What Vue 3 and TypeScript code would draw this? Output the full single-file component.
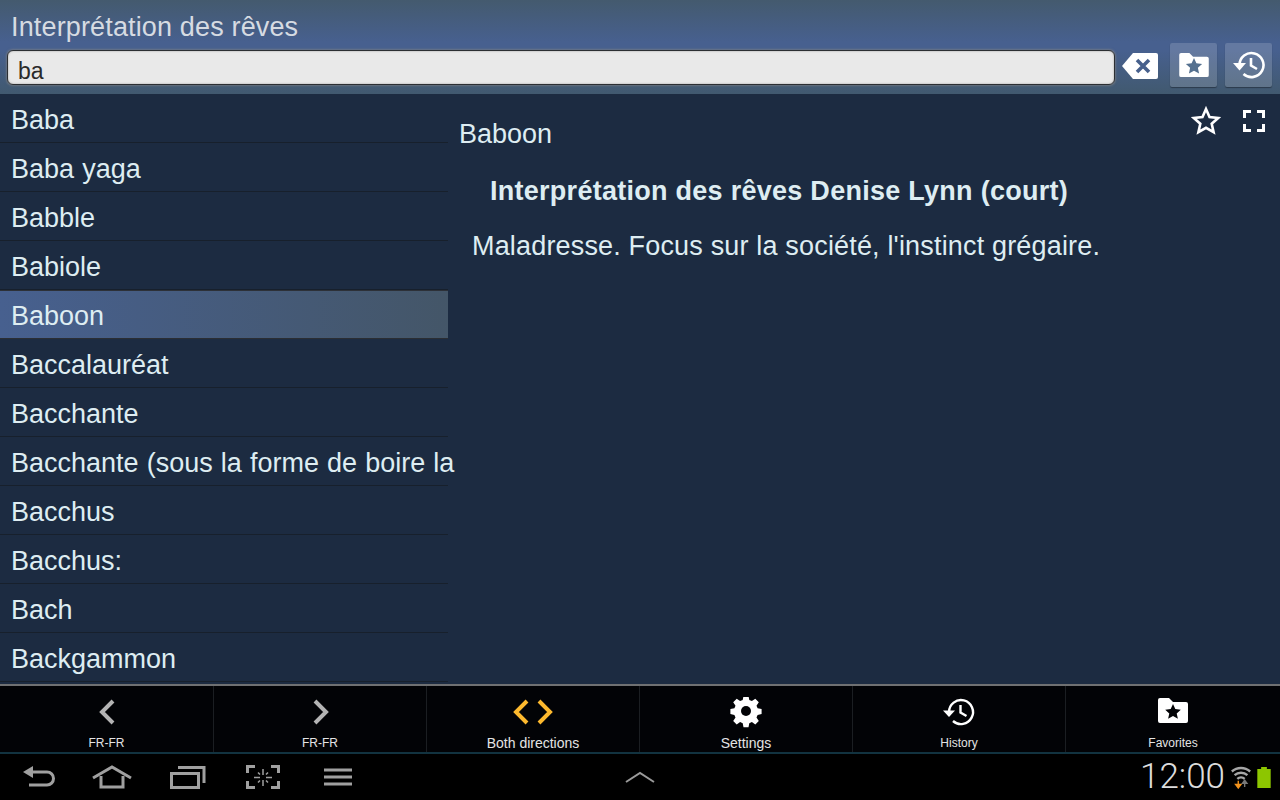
<template>
  <div class="screen">
    <header class="top">
      <div class="top__title">Interprétation des rêves</div>
      <div class="top__search">
        <div class="search-field">ba</div>
        <svg class="clear-icon" viewBox="0 0 36 28" width="36" height="28" aria-hidden="true">
          <path d="M11 1h23a2 2 0 0 1 2 2v22a2 2 0 0 1-2 2H11L0 14z" fill="#fff" />
          <path d="M15 8l12 12M27 8L15 20" stroke="#47608c" stroke-width="3.6" fill="none" />
        </svg>
        <button class="top-btn" type="button" aria-label="Favorites">
          <svg viewBox="0 0 32 26" width="30" height="24" aria-hidden="true">
            <path d="M0 2a2 2 0 0 1 2-2h9l4 4h15a2 2 0 0 1 2 2v18a2 2 0 0 1-2 2H2a2 2 0 0 1-2-2z" fill="#fff" />
            <path d="M16 5.500l2.600 5.700 6.200.7-4.600 4.200 1.300 6.100-5.500-3.100-5.500 3.100 1.300-6.100-4.600-4.200 6.200-.7z" fill="#54708f" />
          </svg>
        </button>
        <button class="top-btn" type="button" aria-label="History">
          <svg viewBox="0 0 32 28" width="32" height="28" aria-hidden="true">
            <path d="M6.500 14a12 12 0 1 1 4 9" fill="none" stroke="#fff" stroke-width="2.600" />
            <path d="M0 12h13l-6.500 7.500z" fill="#fff" />
            <path d="M18 7v7.500l6 3.500" fill="none" stroke="#fff" stroke-width="2.600" />
          </svg>
        </button>
      </div>
    </header>

    <main class="body">
      <ul class="list">
        <li
          v-for="word in words"
          :key="word"
          class="list__row"
          :class="{ 'list__row--active': word === selected }"
        >
          <span class="list__text">{{ word }}</span>
        </li>
      </ul>
      <section class="entry">
        <div class="entry__tools">
          <svg viewBox="0 0 30 30" width="30" height="30" aria-hidden="true">
            <path d="M15 3l3.500 8 8.700.9-6.500 5.800 1.900 8.500-7.600-4.400-7.600 4.400 1.900-8.500-6.500-5.800 8.700-.9z" fill="none" stroke="#fff" stroke-width="2.600" stroke-linejoin="miter" />
          </svg>
          <svg viewBox="0 0 22 22" width="22" height="22" aria-hidden="true">
            <path d="M8 1.500H1.500V8M14 1.500h6.500V8M1.500 14v6.500H8M20.500 14v6.500H14" fill="none" stroke="#fff" stroke-width="3" />
          </svg>
        </div>
        <div class="entry__word">Baboon</div>
        <h2 class="entry__source">Interprétation des rêves Denise Lynn (court)</h2>
        <p class="entry__text">Maladresse. Focus sur la société, l'instinct grégaire.</p>
      </section>
    </main>

    <nav class="tabs">
      <div v-for="tab in tabs" :key="tab.label + tab.icon" class="tab">
        <svg class="tab__icon" viewBox="0 0 44 32" width="44" height="32" aria-hidden="true">
          <path v-if="tab.icon === 'prev'" d="M28 4L17 15l11 11" fill="none" stroke="#b4b4b4" stroke-width="4" />
          <path v-if="tab.icon === 'next'" d="M17 4l11 11-11 11" fill="none" stroke="#b4b4b4" stroke-width="4" />
          <path v-if="tab.icon === 'both'" d="M16 4L5 15l11 11M28 4l11 11-11 11" fill="none" stroke="#fdb92e" stroke-width="4" />
          <template v-if="tab.icon === 'gear'">
            <path d="M19.500 0h5l.8 4 2.600 1.100 3.400-2.300 3.500 3.500-2.300 3.400 1.100 2.600 4 .8v5l-4 .8-1.100 2.600 2.300 3.400-3.500 3.500-3.400-2.300-2.600 1.100-.8 4h-5l-.8-4-2.600-1.100-3.400 2.300-3.500-3.500 2.300-3.400-1.100-2.600-4-.8v-5l4-.8 1.100-2.600-2.300-3.400 3.500-3.500 3.400 2.300 2.600-1.100z" fill="#fff" transform="translate(0 -1)" />
            <circle cx="22" cy="14" r="5" fill="#020306" />
          </template>
          <template v-if="tab.icon === 'history'">
            <path d="M12 15a12 12 0 1 1 4 9" fill="none" stroke="#fff" stroke-width="2.400" />
            <path d="M6 13.500h12L12 20z" fill="#fff" />
            <path d="M23.500 8v7.500l6 3.500" fill="none" stroke="#fff" stroke-width="2.400" />
          </template>
          <template v-if="tab.icon === 'favorite'">
            <path d="M7 3a2 2 0 0 1 2-2h9l4 4h13a2 2 0 0 1 2 2v17a2 2 0 0 1-2 2H9a2 2 0 0 1-2-2z" fill="#fff" />
            <path d="M22 7l2.300 5.100 5.500.6-4.100 3.700 1.200 5.400-4.900-2.800-4.900 2.800 1.200-5.400-4.100-3.700 5.500-.6z" fill="#020306" />
          </template>
        </svg>
        <span class="tab__label" :class="`tab__label--${tab.size}`">{{ tab.label }}</span>
      </div>
    </nav>

    <footer class="sysbar">
      <div class="sysbar__left">
        <svg viewBox="0 0 34 24" width="34" height="24" aria-hidden="true">
          <path d="M10 7h15a6.500 6.500 0 0 1 0 13H7" fill="none" stroke="#a0a0a0" stroke-width="3" />
          <path d="M1 7l10-6v12z" fill="#a0a0a0" />
        </svg>
        <svg viewBox="0 0 40 24" width="40" height="24" aria-hidden="true">
          <path d="M1 13L20 2l19 11" fill="none" stroke="#a0a0a0" stroke-width="3" />
          <path d="M9 11v11h22V11" fill="none" stroke="#a0a0a0" stroke-width="3" />
        </svg>
        <svg viewBox="0 0 36 24" width="36" height="24" aria-hidden="true">
          <rect x="1.500" y="8.500" width="27" height="14" fill="none" stroke="#a0a0a0" stroke-width="3" />
          <path d="M8 2.500h26V18" fill="none" stroke="#a0a0a0" stroke-width="3" />
        </svg>
        <svg viewBox="0 0 34 24" width="34" height="24" aria-hidden="true">
          <path d="M9 1.500H1.500V8M25 1.500h7.500V8M1.500 16v6.500H9M32.500 16v6.500H25" fill="none" stroke="#a0a0a0" stroke-width="3" />
          <path d="M17 4v6M17 15v6M8 12.500h6M20 12.500h6M12 7.500l2 2M22 7.500l-2 2M12 17.500l2-2M22 17.500l-2-2" fill="none" stroke="#a0a0a0" stroke-width="1.500" />
        </svg>
        <svg viewBox="0 0 28 18" width="28" height="18" aria-hidden="true">
          <path d="M0 2h28M0 9h28M0 16h28" fill="none" stroke="#a0a0a0" stroke-width="3" />
        </svg>
      </div>
      <svg class="sysbar__up" viewBox="0 0 30 12" width="30" height="12" aria-hidden="true">
        <path d="M1 11L15 2l14 9" fill="none" stroke="#9a9a9a" stroke-width="2" />
      </svg>
      <div class="sysbar__right">
        <span class="clock">12:00</span>
        <svg viewBox="0 0 24 26" width="22" height="24" aria-hidden="true">
          <path d="M2 7a15 15 0 0 1 20 0M5 11a10.500 10.500 0 0 1 14 0M8 15a6 6 0 0 1 8 0" fill="none" stroke="#a6a6a6" stroke-width="2.600" />
          <path d="M9 17v6M6 21l3 4 3-4z" fill="#f2921c" stroke="#f2921c" stroke-width="1.500" />
          <path d="M16 24v-6M13.500 20l2.500-3.500 2.500 3.500z" fill="#777" stroke="#777" stroke-width="1.500" />
        </svg>
        <svg class="battery" viewBox="0 0 14 22" width="14" height="21" aria-hidden="true">
          <path d="M4 0h6v2h4v20H0V2h4z" fill="#8dc600" />
        </svg>
      </div>
    </footer>
  </div>
</template>

<script setup lang="ts">
type Tab = {
  icon: 'prev' | 'next' | 'both' | 'gear' | 'history' | 'favorite'
  label: string
  size: 'sm' | 'md'
}

const selected = 'Baboon'

const words: string[] = [
  'Baba',
  'Baba yaga',
  'Babble',
  'Babiole',
  'Baboon',
  'Baccalauréat',
  'Bacchante',
  'Bacchante (sous la forme de boire la coupe)',
  'Bacchus',
  'Bacchus:',
  'Bach',
  'Backgammon',
]

const tabs: Tab[] = [
  { icon: 'prev', label: 'FR-FR', size: 'sm' },
  { icon: 'next', label: 'FR-FR', size: 'sm' },
  { icon: 'both', label: 'Both directions', size: 'md' },
  { icon: 'gear', label: 'Settings', size: 'md' },
  { icon: 'history', label: 'History', size: 'sm' },
  { icon: 'favorite', label: 'Favorites', size: 'sm' },
]
</script>

<style>
html,
body {
  margin: 0;
  background: #000;
}
</style>

<style scoped>
.screen {
  display: flex;
  flex-direction: column;
  width: 1280px;
  height: 800px;
  overflow: hidden;
  font-family: "Liberation Sans", Arial, sans-serif;
}

.top {
  flex: none;
  box-sizing: border-box;
  height: 94px;
  padding: 12px 8px 0 7px;
  background: linear-gradient(#445a6e 0, #47608f 42px, #47608f 50px, #41596f 94px);
}

.top__title {
  height: 30px;
  padding-left: 4px;
  color: #d6dbe2;
  font-size: 27px;
  letter-spacing: 0.15px;
  line-height: 30px;
}

.top__search {
  display: flex;
  align-items: center;
  gap: 8px;
  height: 44px;
  margin-top: 1px;
}

.search-field {
  box-sizing: border-box;
  flex: 1;
  height: 35px;
  margin-top: 4px;
  padding-left: 10px;
  border: 1px solid #2c2f33;
  border-radius: 6px;
  color: #2a2a2a;
  background: #e9e9e9;
  box-shadow: 0 0 2px 1px rgb(130 130 130 / 60%), inset 0 0 2px rgb(120 120 120 / 70%);
  font-size: 23px;
  line-height: 40px;
}

.clear-icon {
  margin: 2px 4px 0 -1px;
}

.top-btn {
  display: grid;
  width: 47px;
  height: 44px;
  padding: 0;
  place-items: center;
  border: 0;
  border-radius: 2px;
  background: rgb(255 255 255 / 16%);
  box-shadow: 0 1px 1px rgb(0 0 0 / 35%);
}

.body {
  display: flex;
  flex: none;
  height: 590px;
  overflow: hidden;
  background: #1c2b41;
}

.list {
  flex: none;
  width: 448px;
  margin: 0;
  padding: 0;
  list-style: none;
}

.list__row {
  box-sizing: border-box;
  width: 448px;
  height: 49px;
  border-bottom: 1px solid #17202c;
  color: #deedf2;
  font-size: 27px;
  line-height: 52px;
  white-space: nowrap;
  word-spacing: 0.6px;
}

.list__row--active {
  border-top: 1px solid #2d3138;
  border-bottom: 1px solid #2b2e33;
  background: linear-gradient(90deg, #47608f, #445668);
  line-height: 50px;
}

.list__text {
  display: block;
  width: 444px;
  height: 48px;
  overflow: hidden;
  padding-left: 11px;
}

.entry {
  position: relative;
  flex: 1;
  padding: 24px 0 0 11px;
  color: #deedf2;
}

.entry__tools {
  position: absolute;
  top: 12px;
  right: 15px;
  display: flex;
  align-items: center;
  gap: 22px;
}

.entry__word {
  font-size: 27px;
  line-height: 32px;
}

.entry__source {
  margin: 25px 0 0 31px;
  font-size: 27px;
  font-weight: 700;
  letter-spacing: 0.27px;
  line-height: 32px;
}

.entry__text {
  margin: 23px 0 0 13px;
  font-size: 27px;
  letter-spacing: 0.17px;
  line-height: 32px;
}

.tabs {
  display: grid;
  flex: none;
  grid-template-columns: 214px repeat(4, 213px) 1fr;
  box-sizing: border-box;
  height: 70px;
  border-top: 2px solid #6f7072;
  border-bottom: 2px solid #123340;
  background: #020306;
}

.tab {
  display: flex;
  flex-direction: column;
  align-items: center;
  justify-content: flex-end;
  height: 66px;
  border-right: 1px solid #1b1e22;
}

.tab:last-child {
  border-right: 0;
}

.tab__icon {
  flex: none;
  margin-bottom: 5px;
}

.tab__label {
  height: 18px;
  color: #e4e4e4;
  line-height: 18px;
}

.tab__label--sm {
  font-size: 12px;
}

.tab__label--md {
  font-size: 14px;
}

.sysbar {
  display: flex;
  flex: none;
  align-items: center;
  height: 46px;
  background: #000;
}

.sysbar__left {
  display: grid;
  flex: none;
  grid-template-columns: 70px 78px 76px 78px 28px;
  align-items: center;
  box-sizing: border-box;
  width: 625px;
  padding-left: 22px;
}

.sysbar__up {
  flex: none;
}

.sysbar__right {
  display: flex;
  align-items: center;
  gap: 5px;
  margin-left: auto;
  padding-right: 9px;
}

.clock {
  color: #dcdcdc;
  font-family: Roboto, "Liberation Sans", sans-serif;
  font-size: 35px;
  font-weight: 300;
  line-height: 40px;
}
</style>
